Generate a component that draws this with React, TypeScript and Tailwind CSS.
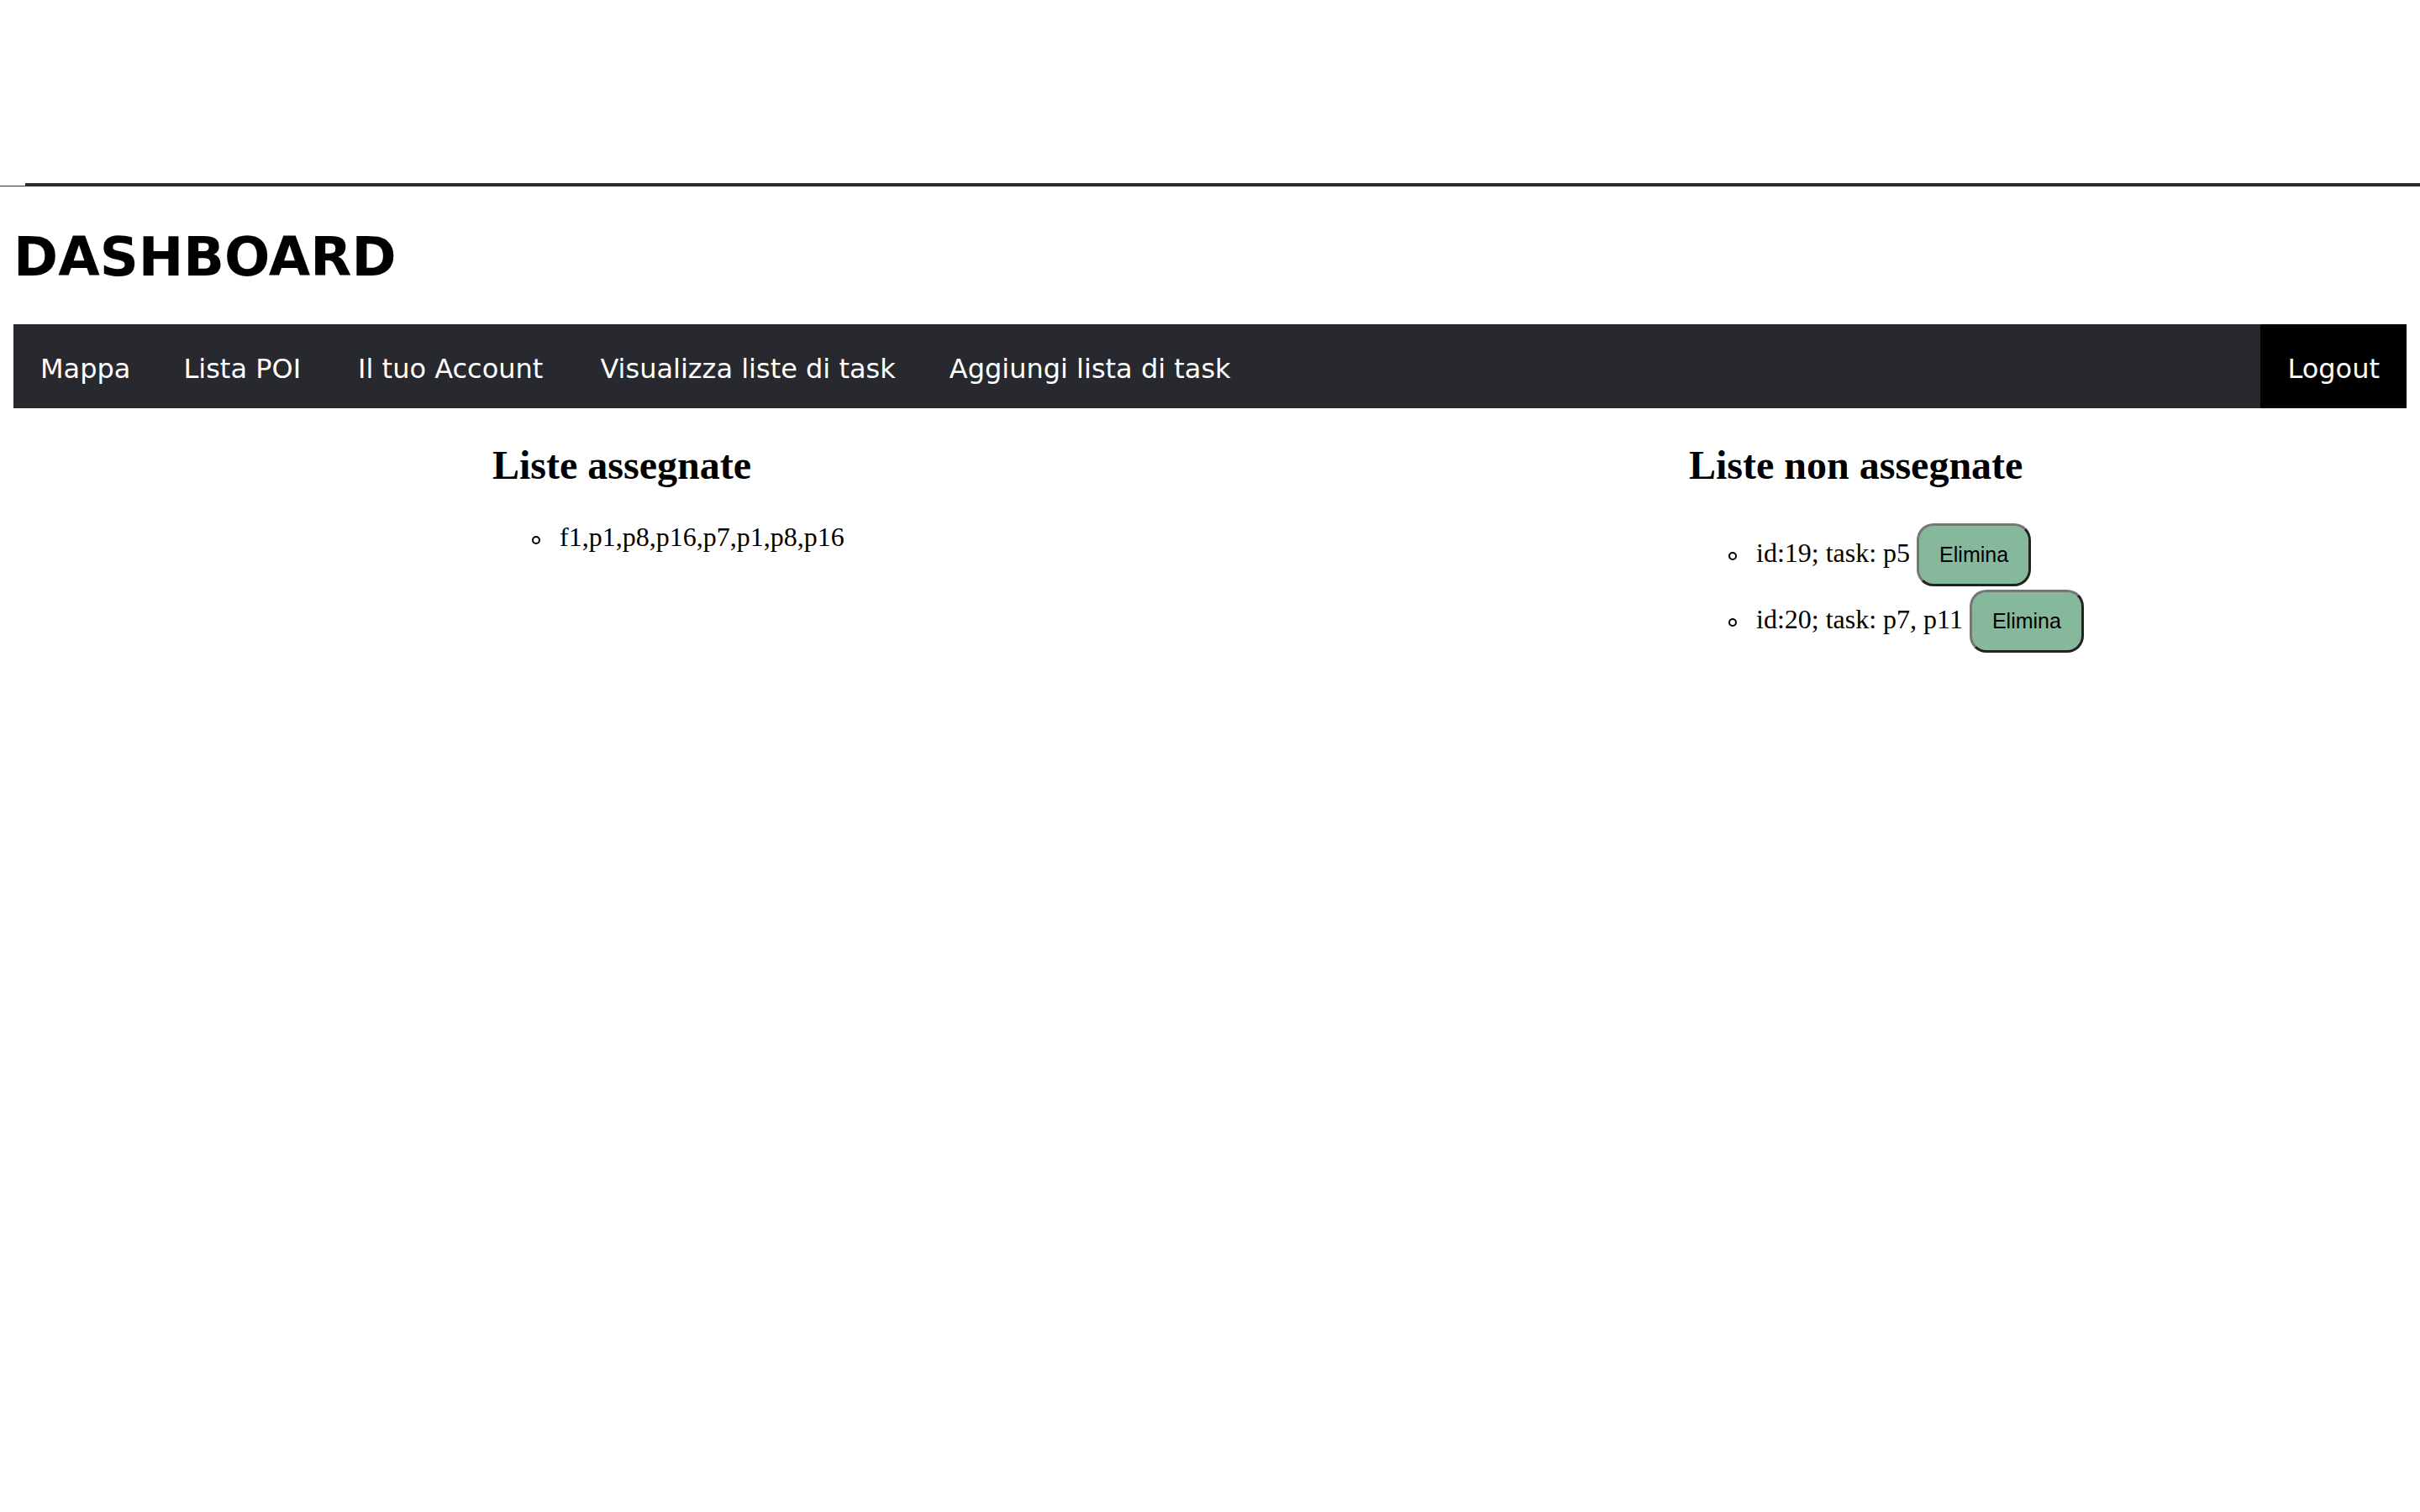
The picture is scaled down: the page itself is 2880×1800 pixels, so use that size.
import React from "react";

function DelButton() {
  return (
    <button
      type="button"
      className="inline-block align-baseline my-[2px] px-[24px] py-[20px] text-[25px] leading-[29px] text-black bg-[#86b99b] border-[3px] border-solid border-t-[#767676] border-l-[#767676] border-r-[#222222] border-b-[#222222] rounded-[20px]"
      style={{ fontFamily: '"Liberation Sans", Arial, sans-serif' }}
    >
      Elimina
    </button>
  );
}

function Bullet() {
  return (
    <span className="inline-block align-middle w-[10px] h-[10px] rounded-full border-[2px] border-solid border-black -ml-[33px] mr-[23px]" />
  );
}

export default function App() {
  return (
    <div className="min-h-[1800px] w-full bg-white text-black" style={{ fontFamily: '"Liberation Serif", "Times New Roman", serif' }}>
      <div className="h-[218px]" />
      <div className="flex h-[4px]">
        <div className="w-[30px] self-end h-px bg-[#333333]" />
        <div className="flex-1 bg-[#2d2d2d]" />
      </div>
      <div className="px-[16px]">
        <h1
          className="mt-[47px] mb-[43px] text-[64px] leading-[74px] font-bold"
          style={{ fontFamily: '"DejaVu Sans", Verdana, sans-serif' }}
        >
          DASHBOARD
        </h1>
        <nav
          className="flex h-[100px] bg-[#28282f] text-white text-[32px]"
          style={{ fontFamily: '"DejaVu Sans", Verdana, sans-serif' }}
        >
          <a className="pl-[32px] pr-[32px] pt-[31px] pb-[25px] leading-[44px] whitespace-nowrap">Mappa</a>
          <a className="pl-[31px] pr-[36px] pt-[31px] pb-[25px] leading-[44px] whitespace-nowrap">Lista POI</a>
          <a className="pl-[32px] pr-[36px] pt-[31px] pb-[25px] leading-[44px] whitespace-nowrap">Il tuo Account</a>
          <a className="pl-[32px] pr-[32px] pt-[31px] pb-[25px] leading-[44px] whitespace-nowrap">Visualizza liste di task</a>
          <a className="pl-[32px] pr-[32px] pt-[31px] pb-[25px] leading-[44px] whitespace-nowrap">Aggiungi lista di task</a>
          <a className="ml-auto bg-black px-[32px] pt-[31px] pb-[25px] leading-[44px]">Logout</a>
        </nav>
        <div className="grid grid-cols-2">
          <div className="pl-[570px]">
            <h2 className="mt-[40px] mb-[40px] text-[48px] leading-[55px] font-bold">Liste assegnate</h2>
            <ul className="list-none pl-[80px] text-[32px] leading-[37px]">
              <li>
                <Bullet />f1,p1,p8,p16,p7,p1,p8,p16
              </li>
            </ul>
          </div>
          <div className="pl-[570px]">
            <h2 className="mt-[40px] mb-[40px] text-[48px] leading-[55px] font-bold">Liste non assegnate</h2>
            <ul className="list-none pl-[80px] text-[32px] leading-[37px]">
              <li>
                <Bullet />id:19; task: p5 <DelButton />
              </li>
              <li>
                <Bullet />id:20; task: p7, p11 <DelButton />
              </li>
            </ul>
          </div>
        </div>
      </div>
    </div>
  );
}
